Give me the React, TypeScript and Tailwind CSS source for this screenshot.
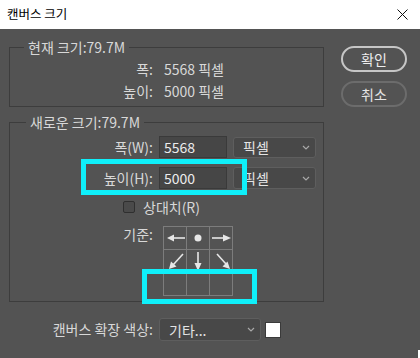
import { FC } from "react";

const font = { fontFamily: '"Noto Sans CJK KR", "Noto Sans", sans-serif' };

const Chevron: FC = () => (
    <svg width="8" height="5" viewBox="0 0 8 5" className="shrink-0">
        <path d="M1 1 L4 4 L7 1" fill="none" stroke="#a8a8a8" strokeWidth="1.2" />
    </svg>
);

const Select: FC<{ label: string; className: string }> = ({ label, className }) => (
    <div className={`flex items-center justify-between bg-[#484848] border border-[#5e5e5e] rounded-[3px] pl-[9px] pr-[5px] text-[#e4e4e4] ${className}`}>
        <span className="text-[14px] leading-none">{label}</span>
        <Chevron />
    </div>
);

const Arrow: FC<{ d: string; head: string }> = ({ d, head }) => (
    <svg width="22" height="22" viewBox="0 0 22 22" className="overflow-visible">
        <path d={d} stroke="#e6e6e6" strokeWidth="1.6" fill="none" />
        <polygon points={head} fill="#e6e6e6" />
    </svg>
);

const cells = [
    <Arrow key="l" d="M9 11 L21 11" head="3,11 10,7.5 10,14.5" />,
    <svg key="c" width="22" height="22" viewBox="0 0 22 22"><circle cx="11" cy="11" r="3.5" fill="#e6e6e6" /></svg>,
    <Arrow key="r" d="M2 11 L14 11" head="21,11 13,7.5 13,14.5" />,
    <Arrow key="dl" d="M19 4 L9 15" head="5,19 7,11.5 12.5,16.5" />,
    <Arrow key="d" d="M11 2 L11 13" head="11,21 7.5,13 14.5,13" />,
    <Arrow key="dr" d="M7 4 L16 14" head="20,19 12.5,16.5 17.5,11.5" />,
    null, null, null,
];

const App: FC = () => {
    return (
        <div className="relative w-[420px] h-[358px] bg-[#535353] flex flex-col overflow-hidden" style={font}>
            {/* title bar */}
            <div className="h-[29px] bg-white flex items-center justify-between pl-[7px] pr-[12px]">
                <span className="text-[12.5px] text-black">캔버스 크기</span>
                <svg width="11" height="11" viewBox="0 0 11 11">
                    <path d="M0.5 0.5 L10.5 10.5 M10.5 0.5 L0.5 10.5" stroke="#111" strokeWidth="1" />
                </svg>
            </div>

            <div className="flex pl-[9px] text-[14px] text-[#d8d8d8]">
                <div className="w-[315px] flex flex-col">
                    {/* current size */}
                    <div className="relative mt-[18px] h-[60px] border border-[#3d3d3d] pt-[10px]">
                        <span className="absolute -top-[9px] left-[14px] px-[4px] bg-[#535353] leading-[16px]">현재 크기:79.7M</span>
                        <div className="flex items-center h-[22px]">
                            <span className="w-[143px] text-right">폭:</span>
                            <span className="ml-[11px]">5568 픽셀</span>
                        </div>
                        <div className="flex items-center h-[22px]">
                            <span className="w-[143px] text-right">높이:</span>
                            <span className="ml-[11px]">5000 픽셀</span>
                        </div>
                    </div>

                    {/* new size */}
                    <div className="relative mt-[15px] h-[180px] border border-[#3d3d3d] pt-[13px]">
                        <span className="absolute -top-[9px] left-[16px] px-[4px] bg-[#535353] leading-[16px]">새로운 크기:79.7M</span>
                        <div className="flex items-center h-[22px]">
                            <span className="w-[143px] text-right">폭(W):</span>
                            <div className="ml-[6px] w-[68px] h-[22px] bg-[#464646] border border-[#3a3a3a] flex items-center pl-[4px] text-[#ececec]">5568</div>
                            <Select label="픽셀" className="ml-[6px] w-[83px] h-[21px]" />
                        </div>
                        <div className="flex items-center h-[22px] mt-[9px]">
                            <span className="w-[143px] text-right">높이(H):</span>
                            <div className="ml-[6px] w-[68px] h-[22px] bg-[#464646] border border-[#3a3a3a] flex items-center pl-[4px] text-[#ececec]">5000</div>
                            <Select label="픽셀" className="ml-[6px] w-[83px] h-[22px]" />
                        </div>
                        <div className="flex items-center h-[16px] mt-[10px] pl-[113px]">
                            <div className="w-[12px] h-[12px] rounded-[2px] border border-[#2f2f2f] bg-[#4a4a4a]" />
                            <span className="ml-[8px]">상대치(R)</span>
                        </div>
                        <div className="flex items-start mt-[11px]">
                            <span className="w-[143px] text-right leading-[16px]">기준:</span>
                            <div className="ml-[10px] grid grid-cols-3 border-l border-t border-[#7c7c7c]">
                                {cells.map((c, i) => (
                                    <div key={i} className="w-[23px] h-[23px] border-r border-b border-[#7c7c7c] flex items-center justify-center">
                                        {c}
                                    </div>
                                ))}
                            </div>
                        </div>
                    </div>

                    {/* canvas extension colour */}
                    <div className="flex items-center h-[23px] mt-[16px]">
                        <span className="w-[144px] text-right">캔버스 확장 색상:</span>
                        <Select label="기타..." className="ml-[6px] w-[102px] h-[23px]" />
                        <div className="ml-[4px] w-[16px] h-[16px] bg-white border border-[#3a3a3a]" />
                    </div>
                </div>

                {/* buttons */}
                <div className="ml-[17px] flex flex-col">
                    <button className="mt-[17px] w-[66px] h-[26px] rounded-full border-2 border-[#c6c6c6] text-[14px] text-[#eeeeee]">확인</button>
                    <button className="mt-[9px] w-[66px] h-[26px] rounded-full border-2 border-[#6c6c6c] text-[14px] text-[#e4e4e4]">취소</button>
                </div>
            </div>

            {/* annotation boxes */}
            <div className="absolute left-[81px] top-[159px] w-[166px] h-[36px] border-[5px] border-[#0ff0fa]" />
            <div className="absolute left-[142px] top-[269px] w-[115px] h-[35px] border-[5px] border-[#0ff0fa]" />
            <div className="absolute right-0 bottom-0 w-[2px] h-[8px] bg-white" />
        </div>
    );
};

export default App;
